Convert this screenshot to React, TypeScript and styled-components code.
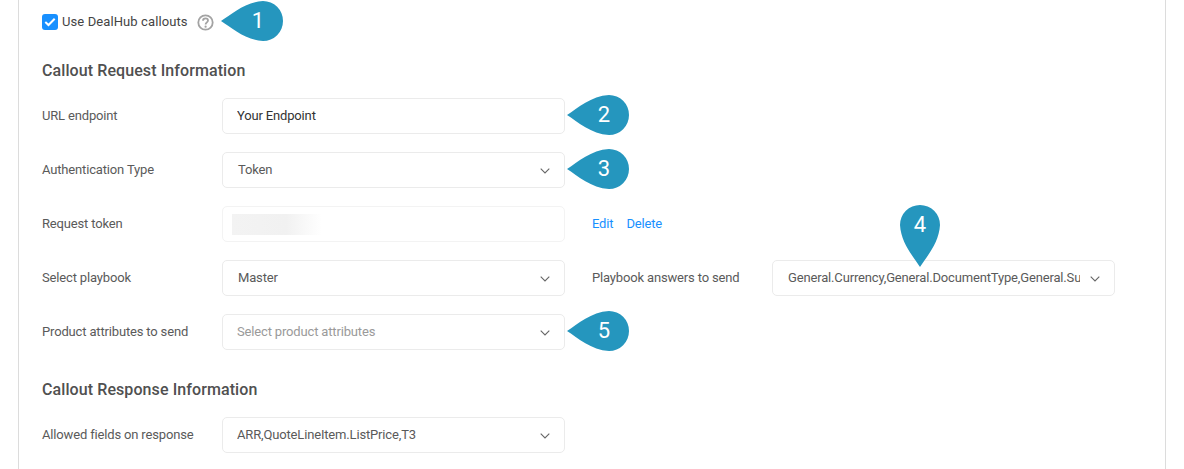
import React from "react";
import styled, { createGlobalStyle } from "styled-components";

const Global = createGlobalStyle`
  html, body { margin: 0; padding: 0; background: #fff; height: 469px; overflow: hidden; }
  body { font-family: Roboto, "Liberation Sans", sans-serif; }
`;

const Panel = styled.main`
  margin: 0 18px;
  height: 469px;
  box-sizing: border-box;
  border-left: 1px solid #dcdcdc;
  border-right: 1px solid #dcdcdc;
  padding: 13px 0 0 23px;
  color: #555;
  font-size: 13px;
  letter-spacing: -0.16px;
  overflow: hidden;
`;

const CheckRow = styled.div`
  display: flex;
  align-items: center;
  height: 18px;
  position: relative;
`;

const CheckBox = styled.span`
  width: 16px;
  height: 16px;
  border-radius: 3px;
  background: #1890ff;
  display: flex;
  align-items: center;
  justify-content: center;
  margin-right: 4px;
`;

const CheckLabel = styled.span`
  color: #444;
  font-size: 13px;
  letter-spacing: 0.1px;
  padding-bottom: 2px;
`;

const HelpIcon = styled.svg`
  width: 17px;
  height: 17px;
  margin-left: 9px;
`;

const SectionTitle = styled.h3`
  margin: 30px 0 17px;
  font-size: 16px;
  line-height: 20px;
  font-weight: 500;
  color: #505050;
  letter-spacing: 0.09px;
`;

const Row = styled.div`
  display: flex;
  align-items: center;
  height: 36px;
  margin-bottom: 18px;
`;

const Label = styled.label`
  width: 180px;
  flex: none;
  color: #5a5a5a;
  padding-bottom: 2px;
`;

const SecondLabel = styled(Label)`
  margin-left: 27px;
`;

const Control = styled.div<{ $faint?: boolean }>`
  position: relative;
  width: 343px;
  height: 36px;
  flex: none;
  box-sizing: border-box;
  border: 1px solid ${(p) => (p.$faint ? "#f3f3f3" : "#ebebeb")};
  border-radius: 5px;
  background: #fff;
  display: flex;
  align-items: center;
  padding: 0 14px;
`;

const Value = styled.span<{ $dark?: boolean; $muted?: boolean; $inset?: boolean }>`
  flex: 1;
  min-width: 0;
  white-space: nowrap;
  overflow: hidden;
  padding: 0 0 2px ${(p) => (p.$inset ? 1 : 0)}px;
  color: ${(p) => (p.$muted ? "#9a9a9a" : p.$dark ? "#333" : "#5a5a5a")};
`;

const Chevron = styled.svg`
  width: 10px;
  height: 6px;
  flex: none;
  margin: 1px 0 0 10px;
`;

const Blur = styled.div`
  width: 90px;
  height: 21px;
  margin-left: -5px;
  background: linear-gradient(90deg, #f3f3f3 0%, #f1f1f1 60%, #ffffff 100%);
`;

const Links = styled.div`
  display: flex;
  gap: 13px;
  margin-left: 27px;
  padding-bottom: 2px;
`;

const LinkText = styled.a`
  color: #1890ff;
  font-size: 13px;
`;

const MarkerWrap = styled.div<{ $pos: string }>`
  position: absolute;
  ${(p) => p.$pos}
  color: #fff;
  font-size: 22px;
  line-height: 40px;
  letter-spacing: 0;
  text-align: center;
`;

const MarkerShape = styled.svg`
  display: block;
`;

const SideNum = styled.span`
  position: absolute;
  right: 5px;
  top: 0;
  width: 40px;
`;

const TopNum = styled.span`
  position: absolute;
  left: 0;
  top: 0;
  width: 40px;
`;

const Side = ({ n, pos }: { n: number; pos: string }) => (
  <MarkerWrap $pos={pos}>
    <MarkerShape width="62" height="40" viewBox="0 0 62 40">
      <path d="M0 20C11 13 24 1 42 0A20 20 0 0 1 42 40C24 39 11 27 0 20Z" fill="#2596be" />
    </MarkerShape>
    <SideNum>{n}</SideNum>
  </MarkerWrap>
);

const Down = () => (
  <Chevron viewBox="0 0 10 6">
    <path d="M0.7 0.7L5 5L9.3 0.7" fill="none" stroke="#666" strokeWidth="1.1" />
  </Chevron>
);

const SIDE = "left: calc(100% + 3px); top: -4px;";

export default function App() {
  return (
    <Panel>
      <Global />
      <CheckRow>
        <CheckBox>
          <svg width="12" height="10" viewBox="0 0 12 10">
            <path d="M1.3 5L4.5 8L10.7 1.7" fill="none" stroke="#fff" strokeWidth="2" />
          </svg>
        </CheckBox>
        <CheckLabel>Use DealHub callouts</CheckLabel>
        <HelpIcon viewBox="0 0 17 17">
          <circle cx="8.5" cy="8.5" r="7.2" fill="none" stroke="#a3a3a3" strokeWidth="1.8" />
          <path d="M6 6.8C6 5.2 7.2 4.4 8.5 4.4C9.9 4.4 11 5.3 11 6.6C11 8.3 8.6 8.4 8.6 10.4" fill="none" stroke="#a3a3a3" strokeWidth="1.8" />
          <circle cx="8.6" cy="12.7" r="1.1" fill="#a3a3a3" />
        </HelpIcon>
        <Side n={1} pos="left: 179px; top: -12px;" />
      </CheckRow>

      <SectionTitle>Callout Request Information</SectionTitle>

      <Row>
        <Label>URL endpoint</Label>
        <Control>
          <Value $dark>Your Endpoint</Value>
          <Side n={2} pos={SIDE} />
        </Control>
      </Row>
      <Row>
        <Label>Authentication Type</Label>
        <Control>
          <Value $inset>Token</Value>
          <Down />
          <Side n={3} pos={SIDE} />
        </Control>
      </Row>
      <Row>
        <Label>Request token</Label>
        <Control $faint>
          <Blur />
        </Control>
        <Links>
          <LinkText>Edit</LinkText>
          <LinkText>Delete</LinkText>
        </Links>
      </Row>
      <Row>
        <Label>Select playbook</Label>
        <Control>
          <Value $inset>Master</Value>
          <Down />
        </Control>
        <SecondLabel>Playbook answers to send</SecondLabel>
        <Control>
          <Value $inset>General.Currency,General.DocumentType,General.SubTotal</Value>
          <Down />
          <MarkerWrap $pos="left: 127px; top: -56px;">
            <MarkerShape width="40" height="62" viewBox="0 0 40 62">
              <path d="M20 62C13 51 1 38 0 20A20 20 0 0 1 40 20C39 38 27 51 20 62Z" fill="#2596be" />
            </MarkerShape>
            <TopNum>4</TopNum>
          </MarkerWrap>
        </Control>
      </Row>
      <Row>
        <Label>Product attributes to send</Label>
        <Control>
          <Value $muted>Select product attributes</Value>
          <Down />
          <Side n={5} pos={SIDE} />
        </Control>
      </Row>

      <SectionTitle>Callout Response Information</SectionTitle>

      <Row>
        <Label>Allowed fields on response</Label>
        <Control>
          <Value>ARR,QuoteLineItem.ListPrice,T3</Value>
          <Down />
        </Control>
      </Row>
    </Panel>
  );
}
